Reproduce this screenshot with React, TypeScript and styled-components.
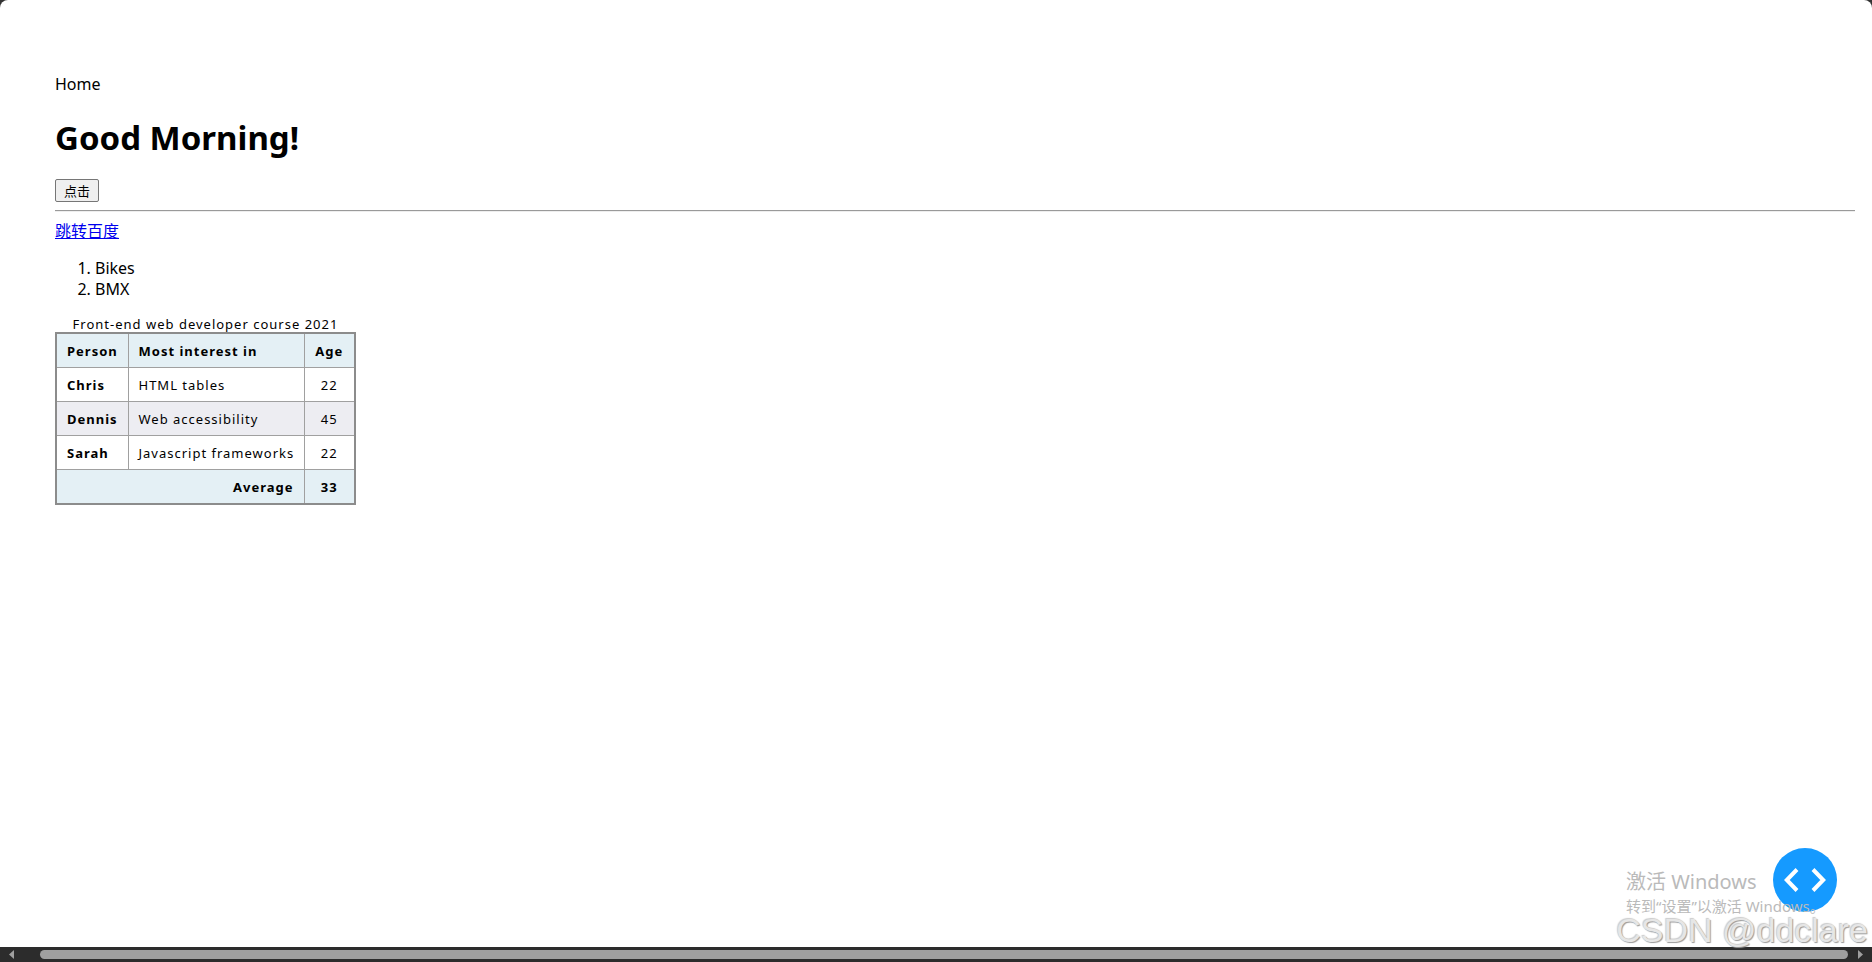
import React from 'react';
import styled, { createGlobalStyle } from 'styled-components';

const GlobalStyle = createGlobalStyle`
  *, *::before, *::after { box-sizing: border-box; }
  body {
    margin: 0;
    background: #333;
    color: #000;
    font: 16px/21px "Noto Sans", "Noto Sans CJK SC", sans-serif;
  }
`;

const Shell = styled.div`
  position: relative;
  display: flex;
  flex-direction: column;
  min-height: 100vh;
`;

const Page = styled.main`
  flex: 1;
  padding: 74px 17px 24px 55px;
  background: #fff;
  border-radius: 8px 8px 0 0;
`;

const Title = styled.h1`
  margin: 21px 0 20px;
  font-size: 33px;
  line-height: 43px;
  font-weight: 700;
`;

const ClickButton = styled.button`
  display: block;
  height: 23px;
  padding: 0 8px;
  border: 1px solid #767676;
  border-radius: 2px;
  background: #efefef;
  color: #000;
  font: 13px/20px "Noto Sans CJK SC", sans-serif;
`;

const Divider = styled.hr`
  height: 2px;
  margin: 8px 0 9px;
  border: 0;
  border-top: 1px solid #9a9a9a;
  border-bottom: 1px solid #eeeeee;
`;

const JumpLink = styled.a`
  display: block;
  width: fit-content;
  color: #0000ee;
  text-decoration: underline;
`;

const Interests = styled.ol`
  margin: 16px 0;
  padding-left: 40px;
`;

const CourseTable = styled.table`
  width: 300px;
  table-layout: fixed;
  border-collapse: collapse;
  border: 2px solid #8c8c8c;
  font-size: 13px;
  line-height: 17px;
  letter-spacing: 1px;
`;

const Caption = styled.caption`
  caption-side: top;
  line-height: 16px;
  white-space: nowrap;
`;

const Column = styled.col<{ $width: number }>`
  width: ${({ $width }) => $width}px;
`;

const Row = styled.tr<{ $tone?: 'accent' | 'striped' }>`
  height: 34px;
  background: ${({ $tone }) =>
    $tone === 'accent' ? '#e4f0f5' : $tone === 'striped' ? '#ededf2' : '#fff'};
`;

type CellProps = { $align?: 'left' | 'center' | 'right' };

const HeadCell = styled.th<CellProps>`
  padding: 9px 10px 7px;
  border: 1px solid #a0a0a0;
  text-align: ${({ $align = 'left' }) => $align};
  white-space: nowrap;
`;

const Cell = styled.td<CellProps & { $bold?: boolean }>`
  padding: 9px 10px 7px;
  border: 1px solid #a0a0a0;
  text-align: ${({ $align = 'left' }) => $align};
  font-weight: ${({ $bold }) => ($bold ? 700 : 400)};
  white-space: nowrap;
`;

const CodeButton = styled.button`
  position: absolute;
  right: 35px;
  bottom: 50px;
  display: grid;
  place-items: center;
  width: 64px;
  height: 64px;
  padding: 0;
  border: 0;
  border-radius: 50%;
  background: #159aff;
`;

const Notice = styled.aside`
  position: absolute;
  left: calc(100% - 246px);
  bottom: 46px;
  color: #bababa;
  font-weight: 400;
  white-space: nowrap;
  pointer-events: none;
`;

const NoticeTitle = styled.div`
  font-size: 20px;
  line-height: 28px;
`;

const NoticeText = styled.div`
  font-size: 15px;
  line-height: 20px;
`;

const Signature = styled.div`
  position: absolute;
  right: 4px;
  bottom: 17px;
  color: #e6e6e6;
  font: 34px/30px "Liberation Sans", sans-serif;
  text-shadow: 1px 1px 1px #999, -1px -1px 1px #ccc;
  white-space: nowrap;
  pointer-events: none;
`;

const ScrollBar = styled.footer`
  display: flex;
  align-items: center;
  justify-content: space-between;
  height: 15px;
  padding: 0 9px;
  background: #2c2c2c;
`;

const ScrollArrow = styled.button`
  display: flex;
  padding: 0;
  border: 0;
  background: none;
`;

const ScrollThumb = styled.div`
  flex: 1;
  height: 9px;
  margin: 0 10px 0 26px;
  border-radius: 5px;
  background: #9f9f9f;
`;

const people = [
  { name: 'Chris', interest: 'HTML tables', age: 22 },
  { name: 'Dennis', interest: 'Web accessibility', age: 45 },
  { name: 'Sarah', interest: 'Javascript frameworks', age: 22 },
];

export default function App() {
  return (
    <>
      <GlobalStyle />
      <Shell>
        <Page>
          <div>Home</div>
          <Title>Good Morning!</Title>
          <ClickButton type="button">点击</ClickButton>
          <Divider />
          <JumpLink href="#baidu">跳转百度</JumpLink>
          <Interests>
            <li>Bikes</li>
            <li>BMX</li>
          </Interests>
          <CourseTable>
            <Caption>Front-end web developer course 2021</Caption>
            <colgroup>
              <Column $width={72} />
              <Column $width={176} />
              <Column $width={51} />
            </colgroup>
            <thead>
              <Row $tone="accent">
                <HeadCell scope="col">Person</HeadCell>
                <HeadCell scope="col">Most interest in</HeadCell>
                <HeadCell scope="col" $align="center">Age</HeadCell>
              </Row>
            </thead>
            <tbody>
              {people.map((person, index) => (
                <Row key={person.name} $tone={index % 2 === 1 ? 'striped' : undefined}>
                  <HeadCell scope="row">{person.name}</HeadCell>
                  <Cell>{person.interest}</Cell>
                  <Cell $align="center">{person.age}</Cell>
                </Row>
              ))}
            </tbody>
            <tfoot>
              <Row $tone="accent">
                <HeadCell scope="row" colSpan={2} $align="right">Average</HeadCell>
                <Cell $align="center" $bold>33</Cell>
              </Row>
            </tfoot>
          </CourseTable>
        </Page>
        <CodeButton type="button" aria-label="Show code">
          <svg width="42" height="24" viewBox="0 0 42 24" fill="none" stroke="#fff" strokeWidth="4">
            <path d="M13 1.5 2.8 12 13 22.5M29 1.5 39.2 12 29 22.5" />
          </svg>
        </CodeButton>
        <Notice>
          <NoticeTitle>激活 Windows</NoticeTitle>
          <NoticeText>转到“设置”以激活 Windows。</NoticeText>
        </Notice>
        <Signature>CSDN @ddclare</Signature>
        <ScrollBar>
          <ScrollArrow type="button" aria-label="Scroll left">
            <svg width="5" height="9" viewBox="0 0 5 9" fill="#9f9f9f"><path d="M5 0v9L0 4.5z" /></svg>
          </ScrollArrow>
          <ScrollThumb />
          <ScrollArrow type="button" aria-label="Scroll right">
            <svg width="5" height="9" viewBox="0 0 5 9" fill="#9f9f9f"><path d="M0 0v9l5-4.5z" /></svg>
          </ScrollArrow>
        </ScrollBar>
      </Shell>
    </>
  );
}
